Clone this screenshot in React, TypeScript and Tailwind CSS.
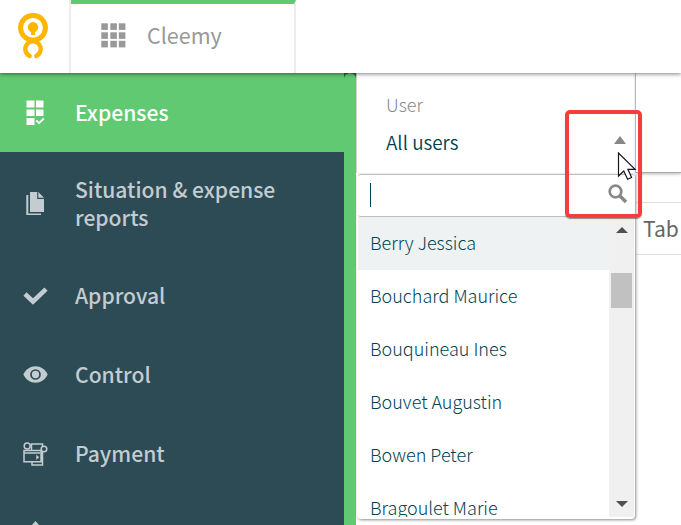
import type { ReactNode } from "react";

const users = ["Berry Jessica", "Bouchard Maurice", "Bouquineau Ines", "Bouvet Augustin", "Bowen Peter", "Bragoulet Marie"];

function Logo() {
  return (
    <svg width="30" height="46" viewBox="0 0 30 46" fill="none" stroke="#ffb600" className="mt-[13px] ml-[18px]">
      <circle cx="15" cy="14.8" r="12.4" strokeWidth="5" />
      <circle cx="15" cy="14.3" r="5.2" fill="#ffb600" stroke="none" />
      <path d="M15 17v5" strokeWidth="4" />
      <path d="M11.700 43A7.700 7.700 0 1 1 18.300 43" strokeWidth="4.400" strokeLinecap="round" />
    </svg>
  );
}

function GridIcon() {
  return (
    <svg width="25" height="25" viewBox="0 0 25 25" fill="#999">
      {[0, 9, 17.500].map((y) => [0, 9, 17.500].map((x) => <rect key={`${x}-${y}`} x={x + 0.3} y={y + 0.3} width="6.600" height="6.600" />))}
    </svg>
  );
}

function ExpensesIcon() {
  return (
    <svg width="19" height="26" viewBox="0 0 19 26" fill="#fff">
      <path d="M.5.500h8v7h-8zM10 .500h7.500v7H10zM.5 9.500h8V16h-8zM10 9.500h7.500V16H10zM.5 18h8v7h-8z" />
      <path d="m10.300 20.300 2.700 2.900 4.800-4.700" fill="none" stroke="#fff" strokeWidth="1.800" />
    </svg>
  );
}

function FilesIcon() {
  return (
    <svg width="19" height="24" viewBox="0 0 19 24" fill="#c3ccd0">
      <path d="M4 0h7.200v7H18v13H4zM12.300 0 18 5.800h-5.700z" />
      <path d="M.3 3h2v18.500H15V23H.3z" />
    </svg>
  );
}

function CheckIcon() {
  return (
    <svg width="25" height="18" viewBox="0 0 25 18">
      <path d="m2 7 8 7.500L23 2.200" fill="none" stroke="#c3ccd0" strokeWidth="4.600" />
    </svg>
  );
}

function EyeIcon() {
  return (
    <svg width="25" height="17" viewBox="0 0 25 17">
      <path d="M.3 8.500C3 3.300 7.200.3 12.500.3s9.500 3 12.200 8.200c-2.700 5.200-6.900 8.200-12.200 8.200S3 13.700.3 8.500Z" fill="#c3ccd0" />
      <circle cx="12.500" cy="8.500" r="4.500" fill="#c3ccd0" stroke="#2d4b55" strokeWidth="1.700" />
    </svg>
  );
}

function PaymentIcon() {
  return (
    <svg width="25" height="24" viewBox="0 0 25 24" fill="none" stroke="#c3ccd0" strokeWidth="1.500">
      <circle cx="4.200" cy="4" r="3" />
      <path d="M8.500 8V2h11v3M1 8.500h17v11.300H1zM1 11h16M9 20v3h10.500V9.500" />
      <circle cx="21" cy="7" r="2.800" />
      <path d="M13.500 13.300v4l2.500-2z" fill="#c3ccd0" strokeWidth=".5" />
    </svg>
  );
}

function NavRow({ icon, label, className = "h-[79px] text-[#c3ccd0]" }: { icon: ReactNode; label: ReactNode; className?: string }) {
  return (
    <div className={`flex shrink-0 items-center text-[21.1px] leading-7 font-medium ${className}`}>
      <span className="flex w-[71px] shrink-0 justify-center">{icon}</span>
      <span className="mb-[2px] ml-[4px]">{label}</span>
    </div>
  );
}

function Dropdown() {
  return (
    <div className="absolute top-[101px] left-px h-[345px] w-[278px] overflow-hidden rounded-b-[4px] bg-white shadow-[1px_1px_3px_rgba(0,0,0,0.45)]">
      <div className="ml-px flex h-[43px] items-center justify-between rounded-[3px] border-y border-[#bdbdbd] pr-[7px] pb-[4px] pl-[12px]">
        <span className="mt-[3px] h-6 w-px bg-[#004355]" />
        <svg width="20" height="20" viewBox="0 0 20 20" fill="none" stroke="#888">
          <circle cx="7.500" cy="7.500" r="5.800" strokeWidth="2.700" />
          <path d="m12 12 6 6" strokeWidth="3.500" />
        </svg>
      </div>
      <div className="flex h-[300px] overflow-hidden">
        <div className="w-[252px] shrink-0 pl-px">
          {users.map((name, i) => (
            <div key={name} className={`flex h-[53px] items-center pb-[4px] pl-[12px] text-[18px] leading-6 font-light text-[#004355] ${i === 0 ? "bg-[#eef2f3]" : "bg-white"}`}>
              {name}
            </div>
          ))}
        </div>
        <div className="flex w-[25px] flex-col items-center bg-[#f0f0f0]">
          <svg width="12" height="6" viewBox="0 0 12 6" className="mt-[10px] shrink-0" fill="#505050"><path d="M6 0 12 6H0z" /></svg>
          <div className="mt-[40px] h-[35px] w-[21px] shrink-0 bg-[#c1c1c1]" />
          <svg width="12" height="6" viewBox="0 0 12 6" className="mt-auto mb-[10px] shrink-0" fill="#505050"><path d="M6 6 12 0H0z" /></svg>
        </div>
      </div>
    </div>
  );
}

export default function App() {
  return (
    <div className="relative flex h-[525px] w-[681px] flex-col overflow-hidden bg-white font-['Noto_Sans_CJK_SC','Noto_Sans',sans-serif]">
      <header className="relative z-10 flex h-[73px] shrink-0 bg-white shadow-[0_1px_4px_rgba(0,0,0,0.5)]">
        <div className="w-[71px] border-r-2 border-[#ededed]"><Logo /></div>
        <div className="flex w-[225px] items-center border-t-4 border-r-2 border-t-[#61c972] border-r-[#ededed] pb-[7px] pl-[30px]">
          <GridIcon />
          <span className="ml-[21px] text-[21.5px] leading-7 text-[#999]">Cleemy</span>
        </div>
      </header>

      <div className="flex h-[452px]">
        <nav className="flex w-[344px] shrink-0 flex-col overflow-hidden bg-[#2d4b55]">
          <NavRow icon={<ExpensesIcon />} label="Expenses" className="h-[79px] bg-[#61c972] text-white" />
          <NavRow icon={<FilesIcon />} label={<>Situation &amp; expense<br />reports</>} className="h-[104px] text-[#c3ccd0]" />
          <NavRow icon={<CheckIcon />} label="Approval" />
          <NavRow icon={<EyeIcon />} label="Control" />
          <NavRow icon={<PaymentIcon />} label="Payment" />
          <div className="flex h-[79px] shrink-0 justify-center self-start pt-[28px] pl-[27px]">
            <svg width="17" height="17" viewBox="0 0 17 17" fill="#c3ccd0"><path d="m8.500 0 8 9h-5v8h-6V9h-5z" /></svg>
          </div>
        </nav>
        <div className="w-[12px] shrink-0 bg-[#61c972]">
          <div className="h-[6px] bg-[#2d6540]"><div className="h-full rounded-t-[6px] bg-[#61c972]" /></div>
        </div>

        <main className="relative flex min-w-0 flex-1 flex-col">
          <section className="flex h-[100px] shrink-0">
            <div className="flex w-[280px] border-x border-[#cfcfcf] pl-[29px]">
              <div className="flex-1 pt-[17px]">
                <div className="text-[18px] leading-7 font-light text-[#888]">User</div>
                <div className="mt-[10px] text-[18.9px] leading-7 font-[350] text-[#003f52]">All users</div>
              </div>
              <svg width="12" height="8" viewBox="0 0 12 8" fill="#888" className="mt-[63px] mr-[9px]"><path d="m6 0 6 8H0z" /></svg>
            </div>
            <div className="flex-1 border-b border-[#aaa] shadow-[0_1px_3px_rgba(0,0,0,0.3)]" />
          </section>
          <div className="mt-[29px] ml-[280px] flex h-[53px] shrink-0 items-center border-y border-[#dedede] pl-[7px] text-[21px] text-[#666]">Tab</div>
          <Dropdown />
        </main>
      </div>

      <div className="absolute top-[110px] left-[565px] z-20 h-[108px] w-[77px] rounded-[5px] border-4 border-[#f53d3d] shadow-[0_1px_1px_rgba(0,0,0,0.4)]" />
      <svg width="20" height="29" viewBox="0 0 20 29" className="absolute top-[152px] left-[617px] z-30">
        <path d="M1.500 1v23l5.300-5 3.800 8.300 4-1.800-3.700-8.200h7.200z" fill="#fff" stroke="#15151f" strokeWidth="1.200" />
      </svg>
    </div>
  );
}
